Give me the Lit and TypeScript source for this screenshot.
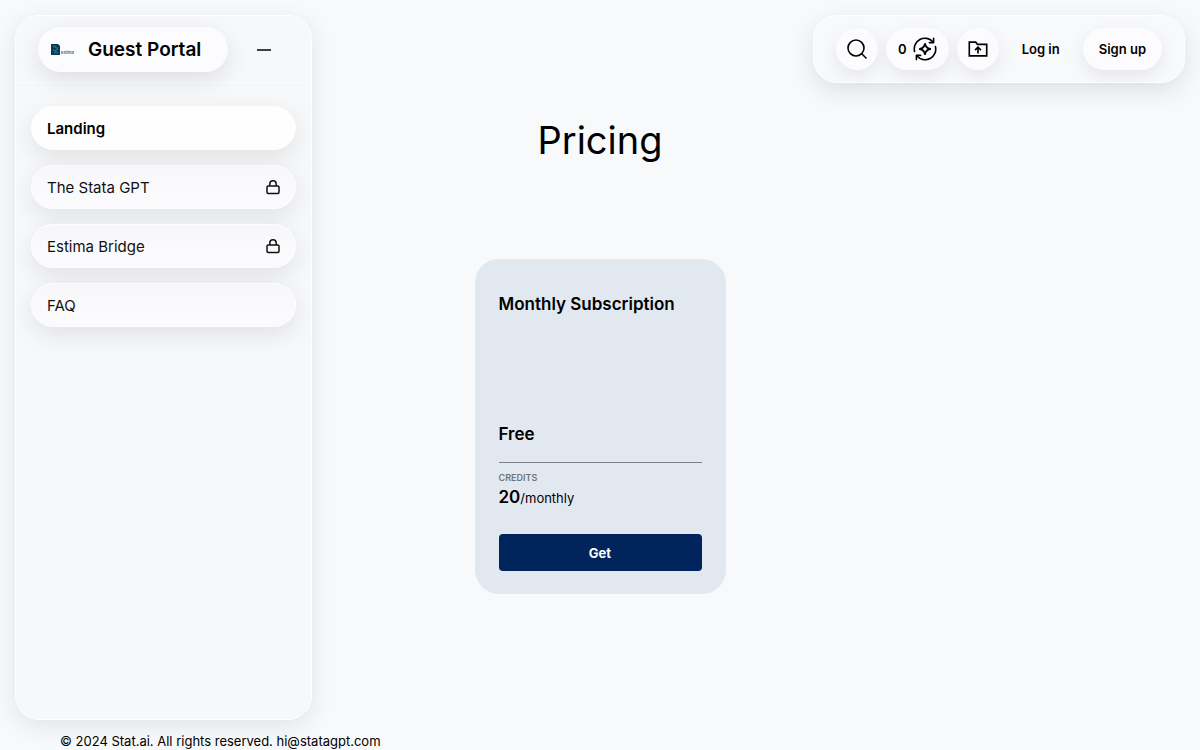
import { LitElement, html, css, svg, nothing } from "lit";
import { customElement, property } from "lit/decorators.js";
import { classMap } from "lit/directives/class-map.js";

const lockIcon = svg`<svg viewBox="0 0 16 16" width="16" height="16" fill="none" stroke="currentColor" stroke-width="1.5" stroke-linejoin="round" aria-hidden="true">
  <rect x="2" y="7" width="12" height="7.500" rx="1.200"></rect>
  <path d="M4.800 7V5a3.200 3.200 0 0 1 6.400 0v2"></path>
</svg>`;

const searchIcon = svg`<svg viewBox="0 0 24 24" width="24" height="24" fill="none" stroke="currentColor" stroke-width="1.6" stroke-linecap="round" aria-hidden="true">
  <circle cx="11" cy="11" r="8"></circle>
  <path d="M17 17l4 4"></path>
</svg>`;

const creditsIcon = svg`<svg viewBox="0 0 24 24" width="24" height="24" fill="none" stroke="currentColor" stroke-width="1.6" stroke-linecap="round" stroke-linejoin="round" aria-hidden="true">
  <path d="M1.600 14.500A10.600 10.600 0 0 1 19.800 4.800"></path>
  <path d="M20.600 1.400V5.600H16.400"></path>
  <path d="M22.400 9.500A10.600 10.600 0 0 1 4.200 19.200"></path>
  <path d="M3.400 22.600V18.400H7.600"></path>
  <path stroke-width="1.800" d="M12 6.800c.6 2.800 2.400 4.600 5.200 5.200-2.800.6-4.600 2.400-5.200 5.200-.6-2.800-2.400-4.600-5.200-5.200 2.800-.6 4.600-2.400 5.200-5.200z"></path>
</svg>`;

const folderIcon = svg`<svg viewBox="0 0 24 24" width="22" height="22" fill="none" stroke="currentColor" stroke-width="1.8" aria-hidden="true">
  <path d="M2.500 4.500h7l2 2.500h10v12.500h-19z"></path>
  <path d="M12 17v-6.500M8.800 13.200L12 10l3.200 3.200"></path>
</svg>`;

const brandMark = svg`<svg viewBox="0 0 24 13" width="24" height="13" aria-hidden="true">
  <path d="M1 1h7l2 2v9H1z" fill="#0b3a58"></path>
  <path d="M3 4l2-1 1 2 2 0M3 7l2 1 3-2M4 10l2-1 2 1" fill="none" stroke="#2f83a3" stroke-width="1"></path>
  <text class="wordmark" x="11" y="11">Estima</text>
</svg>`;

interface NavItem {
  label: string;
  active?: boolean;
  locked?: boolean;
}

@customElement("side-panel")
export class SidePanel extends LitElement {
  @property({ attribute: false }) items: NavItem[] = [];

  static styles = css`
    :host {
      display: flex;
      flex-direction: column;
      box-sizing: border-box;
      border: 1px solid #fff;
      border-radius: 24px;
      background: #f7f8fa;
      box-shadow: 0 6px 24px rgba(0, 0, 0, 0.09);
      overflow: hidden;
    }
    header {
      display: flex;
      align-items: center;
      gap: 24px;
      padding: 11px 22px 10px;
      border-bottom: 1px solid #fcfcfd;
    }
    .brand {
      display: flex;
      align-items: center;
      gap: 14px;
      box-sizing: border-box;
      height: 45px;
      padding: 0 27px 0 12px;
      border-radius: 24px;
      background: #fcfcfe;
      color: #000;
      font-size: 19px;
      font-weight: 600;
      text-decoration: none;
      white-space: nowrap;
      box-shadow: 0 8px 24px rgba(0, 0, 0, 0.1);
    }
    .wordmark {
      font-size: 4px;
      font-weight: 600;
      fill: #36647c;
    }
    .collapse {
      display: grid;
      place-items: center;
      width: 24px;
      height: 24px;
      padding: 0;
      border: 0;
      background: none;
      color: #000;
    }
    nav {
      display: flex;
      flex-direction: column;
      gap: 15px;
      padding: 23px 15px;
    }
    .item {
      display: flex;
      align-items: center;
      justify-content: space-between;
      box-sizing: border-box;
      height: 44px;
      padding: 0 14px 0 15px;
      border: 1px solid #fdfdfe;
      border-radius: 22px;
      background: linear-gradient(#f7f7f9, #fbfbfd 70%);
      color: #111;
      font-size: 15px;
      text-decoration: none;
      box-shadow: 0 8px 24px rgba(0, 0, 0, 0.09);
    }
    .active {
      background: #fefefe;
      color: #000;
      font-weight: 600;
    }
  `;

  render() {
    return html`
      <header>
        <a class="brand" href="#">${brandMark}<span>Guest Portal</span></a>
        <button class="collapse" aria-label="Collapse">
          <svg viewBox="0 0 24 24" width="24" height="24" stroke="currentColor" stroke-width="1.6" aria-hidden="true">
            <path d="M5 12h14"></path>
          </svg>
        </button>
      </header>
      <nav>
        ${this.items.map(
          (item) => html`<a class=${classMap({ item: true, active: !!item.active })} href="#">
            <span>${item.label}</span>${item.locked ? lockIcon : nothing}
          </a>`
        )}
      </nav>
    `;
  }
}

@customElement("top-toolbar")
export class TopToolbar extends LitElement {
  @property({ type: Number }) credits = 0;

  static styles = css`
    :host {
      display: flex;
      gap: 8px;
      padding: 12px 22px;
      border: 1px solid #fff;
      border-radius: 24px;
      background: #f8f9fb;
      box-shadow: 0 8px 24px rgba(0, 0, 0, 0.1);
    }
    button,
    a {
      display: flex;
      align-items: center;
      justify-content: center;
      box-sizing: border-box;
      height: 42px;
      border: 0;
      border-radius: 21px;
      font-family: inherit;
      font-size: 13px;
      font-weight: 600;
      color: #000;
      text-decoration: none;
      white-space: nowrap;
    }
    .raised {
      background: #fcfcfe;
      box-shadow: 0 6px 18px rgba(0, 0, 0, 0.08);
    }
    .round {
      width: 42px;
      padding: 0;
    }
    .credits {
      gap: 6px;
      padding: 0 12px;
    }
    .text {
      padding: 0 15px;
    }
    .raised.text {
      padding: 0 16px;
    }
  `;

  render() {
    return html`
      <button class="raised round" aria-label="Search">${searchIcon}</button>
      <button class="raised credits" aria-label="Credits">${this.credits}${creditsIcon}</button>
      <button class="raised round" aria-label="Upload">${folderIcon}</button>
      <a class="text" href="#">Log in</a>
      <a class="raised text" href="#">Sign up</a>
    `;
  }
}

@customElement("plan-card")
export class PlanCard extends LitElement {
  @property() name = "";
  @property() price = "";
  @property({ type: Number }) credits = 0;

  static styles = css`
    :host {
      display: flex;
      flex-direction: column;
      box-sizing: border-box;
      width: 251px;
      padding: 33px 24px 23px;
      border-radius: 24px;
      background: #e2e8f0;
      color: #000;
    }
    h2,
    p {
      margin: 0;
    }
    h2,
    .price {
      font-size: 17px;
      line-height: 24px;
      font-weight: 600;
    }
    .price {
      margin-top: 106px;
      padding-bottom: 16px;
      border-bottom: 1px solid #7b808a;
    }
    .caption {
      margin-top: 8px;
      font-size: 9px;
      line-height: 14px;
      font-weight: 600;
      color: #70757d;
    }
    .amount {
      font-size: 13px;
      line-height: 24px;
    }
    strong {
      font-size: 17px;
      font-weight: 600;
    }
    button {
      height: 37px;
      margin-top: 24px;
      border: 0;
      border-radius: 4px;
      background: #00245b;
      color: #fff;
      font-family: inherit;
      font-size: 13px;
      font-weight: 700;
    }
  `;

  render() {
    return html`
      <h2>${this.name}</h2>
      <p class="price">${this.price}</p>
      <p class="caption">CREDITS</p>
      <p class="amount"><strong>${this.credits}</strong>/monthly</p>
      <button>Get</button>
    `;
  }
}

@customElement("app-root")
export class AppRoot extends LitElement {
  private items: NavItem[] = [
    { label: "Landing", active: true },
    { label: "The Stata GPT", locked: true },
    { label: "Estima Bridge", locked: true },
    { label: "FAQ" },
  ];

  static styles = css`
    :host {
      display: flex;
      flex-direction: column;
      box-sizing: border-box;
      min-height: 100vh;
      padding: 15px 15px 0;
      background: #f8f9fb;
      color: #000;
      font-family: Inter, "Liberation Sans", sans-serif;
    }
    .layout {
      flex: 1;
      display: grid;
      grid-template-columns: minmax(297px, 1fr) auto minmax(372px, 1fr);
    }
    side-panel {
      width: 297px;
    }
    main {
      display: flex;
      flex-direction: column;
      align-items: center;
      gap: 94px;
      padding-top: 100px;
    }
    h1 {
      margin: 0;
      font-size: 38px;
      line-height: 50px;
      font-weight: 400;
    }
    top-toolbar {
      align-self: start;
      justify-self: end;
    }
    footer {
      padding: 12px 45px 0;
      font-size: 13px;
      line-height: 18px;
    }
  `;

  render() {
    return html`
      <div class="layout">
        <side-panel .items=${this.items}></side-panel>
        <main>
          <h1>Pricing</h1>
          <plan-card name="Monthly Subscription" price="Free" credits="20"></plan-card>
        </main>
        <top-toolbar credits="0"></top-toolbar>
      </div>
      <footer>© 2024 Stat.ai. All rights reserved. hi@statagpt.com</footer>
    `;
  }
}
